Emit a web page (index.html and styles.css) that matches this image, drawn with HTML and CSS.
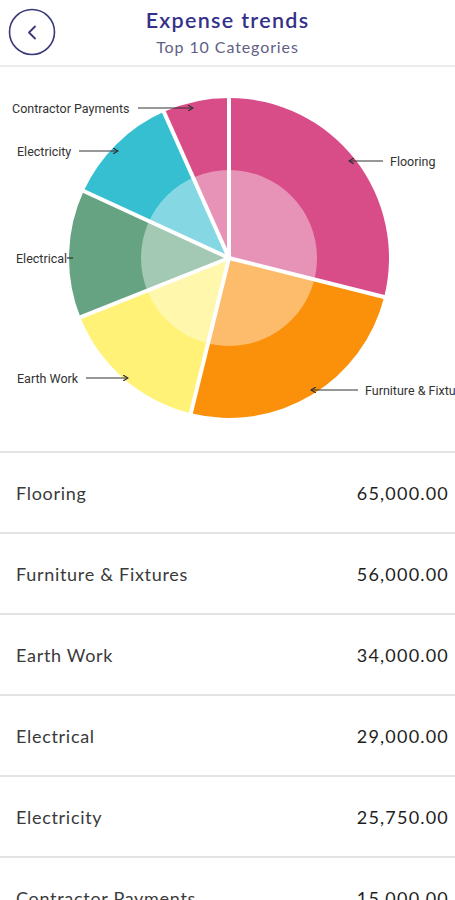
FILE: index.html
```html
<!DOCTYPE html>
<html lang="en">
<head>
<meta charset="utf-8">
<title>Expense trends</title>
<link rel="stylesheet" href="styles.css">
</head>
<body>
<div class="app">
  <header class="topbar">
    <button class="back" aria-label="Back">
      <svg width="48" height="48" viewBox="0 0 48 48">
        <circle cx="24" cy="24" r="22.5" fill="none" stroke="#3a3878" stroke-width="1.6"/>
        <path d="M27 18.5 L21 24.5 L27 30.5" fill="none" stroke="#3a3878" stroke-width="1.8" stroke-linecap="round" stroke-linejoin="round"/>
      </svg>
    </button>
    <div class="titles">
      <h1 class="title">Expense trends</h1>
      <p class="subtitle">Top 10 Categories</p>
    </div>
    <span class="spacer"></span>
  </header>

  <section class="chart">
    <svg class="pie" width="455" height="384" viewBox="0 0 455 384">
      <defs>
        <marker id="ah" markerWidth="6" markerHeight="6" refX="5" refY="3" orient="auto" markerUnits="userSpaceOnUse">
          <path d="M0,0 L5,3 L0,6" fill="none" stroke="#333" stroke-width="1.2"/>
        </marker>
      </defs>
      <path d="M229,191 L229,31 A160,160 0 0 1 384.17,230.02 Z" fill="#d84c88"/>
      <path d="M229,191 L384.17,230.02 A160,160 0 0 1 190.80,346.37 Z" fill="#fb900a"/>
      <path d="M229,191 L190.80,346.37 A160,160 0 0 1 80.36,250.22 Z" fill="#fff276"/>
      <path d="M229,191 L80.36,250.22 A160,160 0 0 1 83.67,124.08 Z" fill="#66a383"/>
      <path d="M229,191 L83.67,124.08 A160,160 0 0 1 163.86,44.86 Z" fill="#35bfd0"/>
      <path d="M229,191 L163.86,44.86 A160,160 0 0 1 229,31 Z" fill="#d84c88"/>
      <circle cx="229" cy="191" r="88" fill="#ffffff" fill-opacity="0.4"/>
      <g stroke="#ffffff" stroke-width="4" stroke-linecap="butt">
        <line x1="229" y1="191" x2="229" y2="28"/>
        <line x1="229" y1="191" x2="387.1" y2="230.8"/>
        <line x1="229" y1="191" x2="190.1" y2="349.3"/>
        <line x1="229" y1="191" x2="77.6" y2="251.3"/>
        <line x1="229" y1="191" x2="80.9" y2="122.8"/>
        <line x1="229" y1="191" x2="162.6" y2="42.1"/>
      </g>
      <g class="leaders" stroke="#333" stroke-width="1.2" fill="none">
        <line x1="138" y1="41" x2="193" y2="41" marker-end="url(#ah)"/>
        <line x1="79" y1="84" x2="118" y2="84" marker-end="url(#ah)"/>
        <line x1="383" y1="94" x2="349" y2="94" marker-end="url(#ah)"/>
        <line x1="67" y1="191" x2="73" y2="191"/>
        <line x1="86" y1="311" x2="128" y2="311" marker-end="url(#ah)"/>
        <line x1="358" y1="323" x2="311" y2="323" marker-end="url(#ah)"/>
      </g>
      <g class="labels">
        <text x="12" y="45.5">Contractor Payments</text>
        <text x="17" y="88.5">Electricity</text>
        <text x="390" y="98.5">Flooring</text>
        <text x="16" y="195.5">Electrical</text>
        <text x="17" y="315.5">Earth Work</text>
        <text x="365" y="327.5">Furniture &amp; Fixtures</text>
      </g>
    </svg>
  </section>

  <ul class="list">
    <li class="row"><span class="name">Flooring</span><span class="amt">65,000.00</span></li>
    <li class="row"><span class="name">Furniture &amp; Fixtures</span><span class="amt">56,000.00</span></li>
    <li class="row"><span class="name">Earth Work</span><span class="amt">34,000.00</span></li>
    <li class="row"><span class="name">Electrical</span><span class="amt">29,000.00</span></li>
    <li class="row"><span class="name">Electricity</span><span class="amt">25,750.00</span></li>
    <li class="row"><span class="name">Contractor Payments</span><span class="amt">15,000.00</span></li>
  </ul>
</div>
</body>
</html>
```

FILE: styles.css
```css
* { box-sizing: border-box; }
html, body {
  margin: 0;
  padding: 0;
  background: #ffffff;
  overflow: hidden;
}
body {
  font-family: "Lato", "Noto Sans", sans-serif;
  color: #222;
}
.app {
  width: 455px;
  height: 900px;
  overflow: hidden;
}
.topbar {
  height: 67px;
  display: grid;
  grid-template-columns: 64px 1fr 64px;
  align-items: center;
  border-bottom: 2px solid #ececec;
}
.back {
  width: 48px;
  height: 48px;
  margin-left: 8px;
  padding: 0;
  border: 0;
  background: transparent;
  display: flex;
  align-self: start;
  margin-top: 8px;
}
.titles {
  text-align: center;
  align-self: start;
  padding-top: 5px;
}
.title {
  margin: 0;
  font-size: 21.5px;
  line-height: 30px;
  font-weight: 600;
  color: #34318a;
  letter-spacing: 1.3px;
}
.subtitle {
  margin: 0;
  font-size: 16px;
  line-height: 24px;
  font-weight: 400;
  color: #5f5f86;
  letter-spacing: 0.9px;
}
.chart {
  height: 386px;
  border-bottom: 2px solid #e3e3e3;
}
.pie { display: block; }
.labels text {
  font-family: "Roboto", "Liberation Sans", sans-serif;
  font-size: 12.5px;
  fill: #333;
}
.list {
  list-style: none;
  margin: 0;
  padding: 0;
}
.row {
  height: 81px;
  border-bottom: 2px solid #e3e3e3;
  display: flex;
  align-items: center;
  justify-content: space-between;
  padding: 0 6px 0 16px;
}
.name {
  font-size: 18px;
  color: #3a3a3a;
  letter-spacing: 0.7px;
}
.amt {
  font-size: 18px;
  color: #1e1e1e;
  letter-spacing: 1.2px;
}
```
